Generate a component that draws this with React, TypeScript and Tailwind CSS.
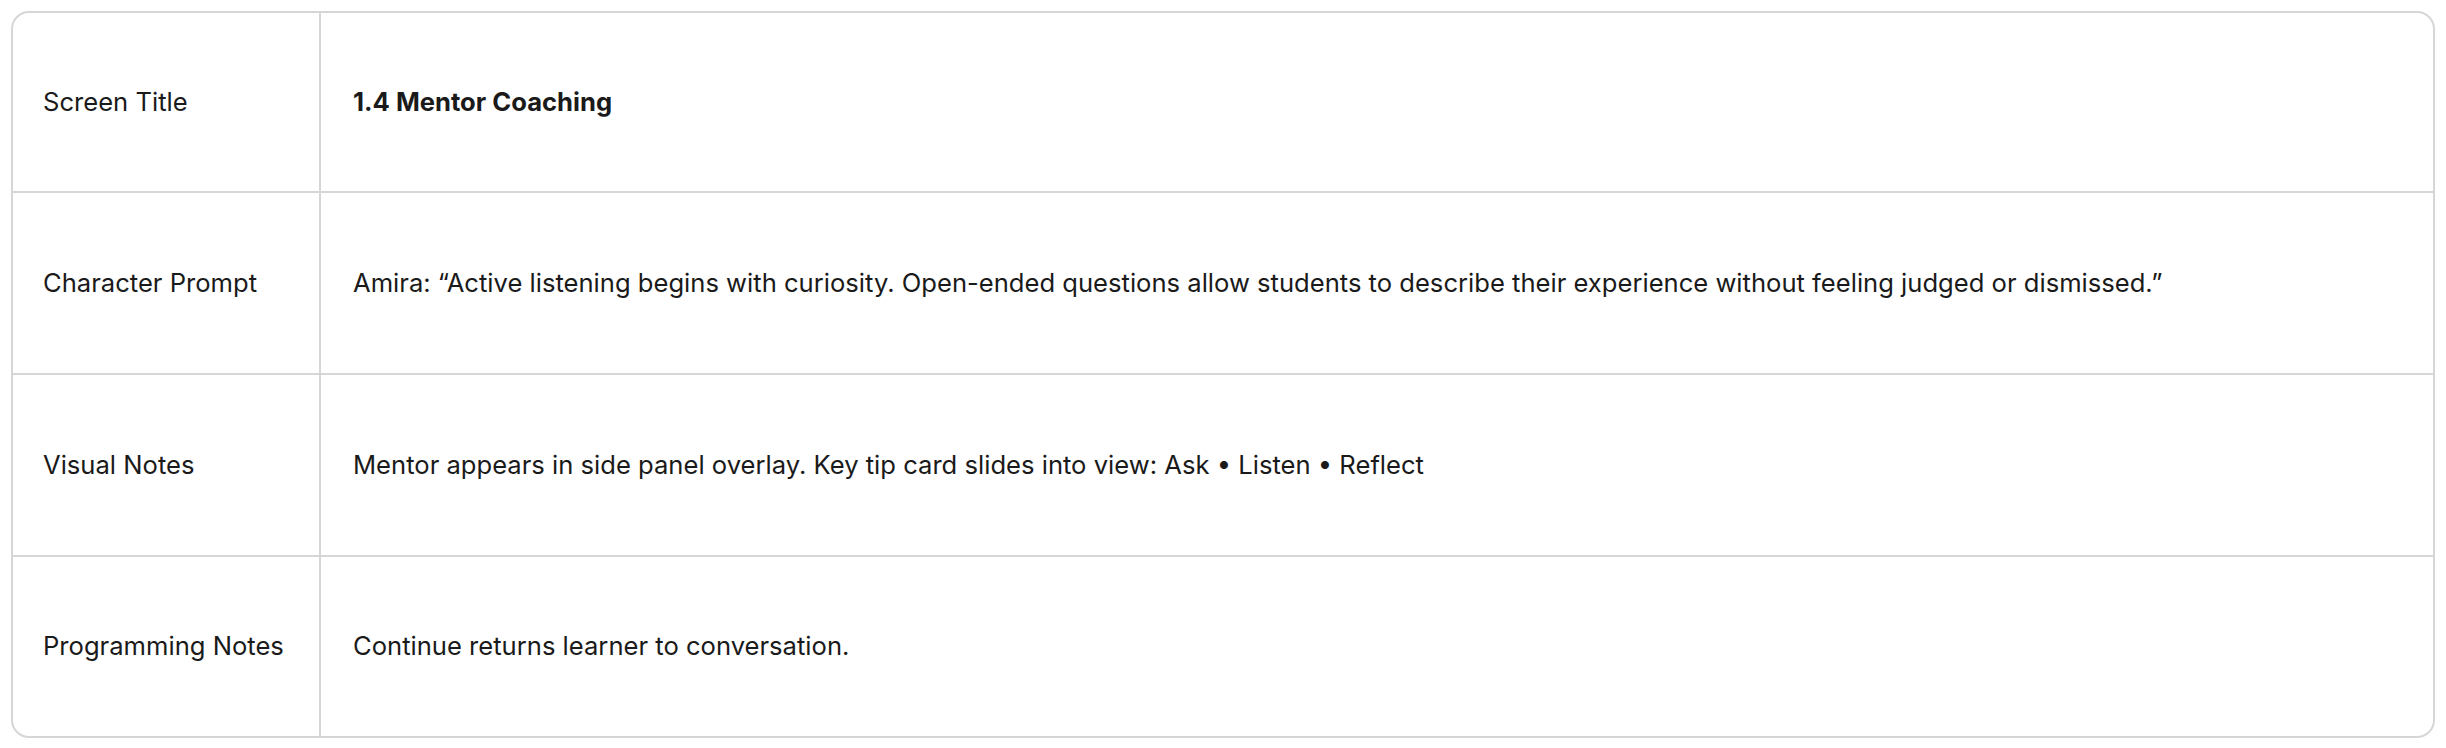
import React from "react";

const rows: { label: string; value: string; bold?: boolean; h: string }[] = [
  { label: "Screen Title", value: "1.4 Mentor Coaching", bold: true, h: "h-[180px]" },
  {
    label: "Character Prompt",
    value:
      "Amira: \u201CActive listening begins with curiosity. Open-ended questions allow students to describe their experience without feeling judged or dismissed.\u201D",
    h: "h-[182px]",
  },
  {
    label: "Visual Notes",
    value: "Mentor appears in side panel overlay. Key tip card slides into view: Ask \u2022 Listen \u2022 Reflect",
    h: "h-[182px]",
  },
  { label: "Programming Notes", value: "Continue returns learner to conversation.", h: "flex-1" },
];

export default function App() {
  return (
    <div className="w-[2446px] h-[748px] bg-white px-[11px] pt-[11px] pb-[10px] font-['Inter','Liberation_Sans',sans-serif] text-[25.6px] text-[#1a1a1a]">
      <div className="h-full flex flex-col rounded-[18px] border-2 border-[#d6d6d6] overflow-hidden">
        {rows.map((r, i) => (
          <div
            key={r.label}
            className={
              r.h + " shrink-0 flex " + (i < rows.length - 1 ? "border-b-2 border-[#d6d6d6]" : "")
            }
          >
            <div className="w-[308px] shrink-0 border-r-2 border-[#d6d6d6] flex items-center pl-[30px]">
              {r.label}
            </div>
            <div
              className={
                "flex-1 flex items-center pl-[32px] pr-8 " + (r.bold ? "font-bold" : "")
              }
            >
              {r.value}
            </div>
          </div>
        ))}
      </div>
    </div>
  );
}
